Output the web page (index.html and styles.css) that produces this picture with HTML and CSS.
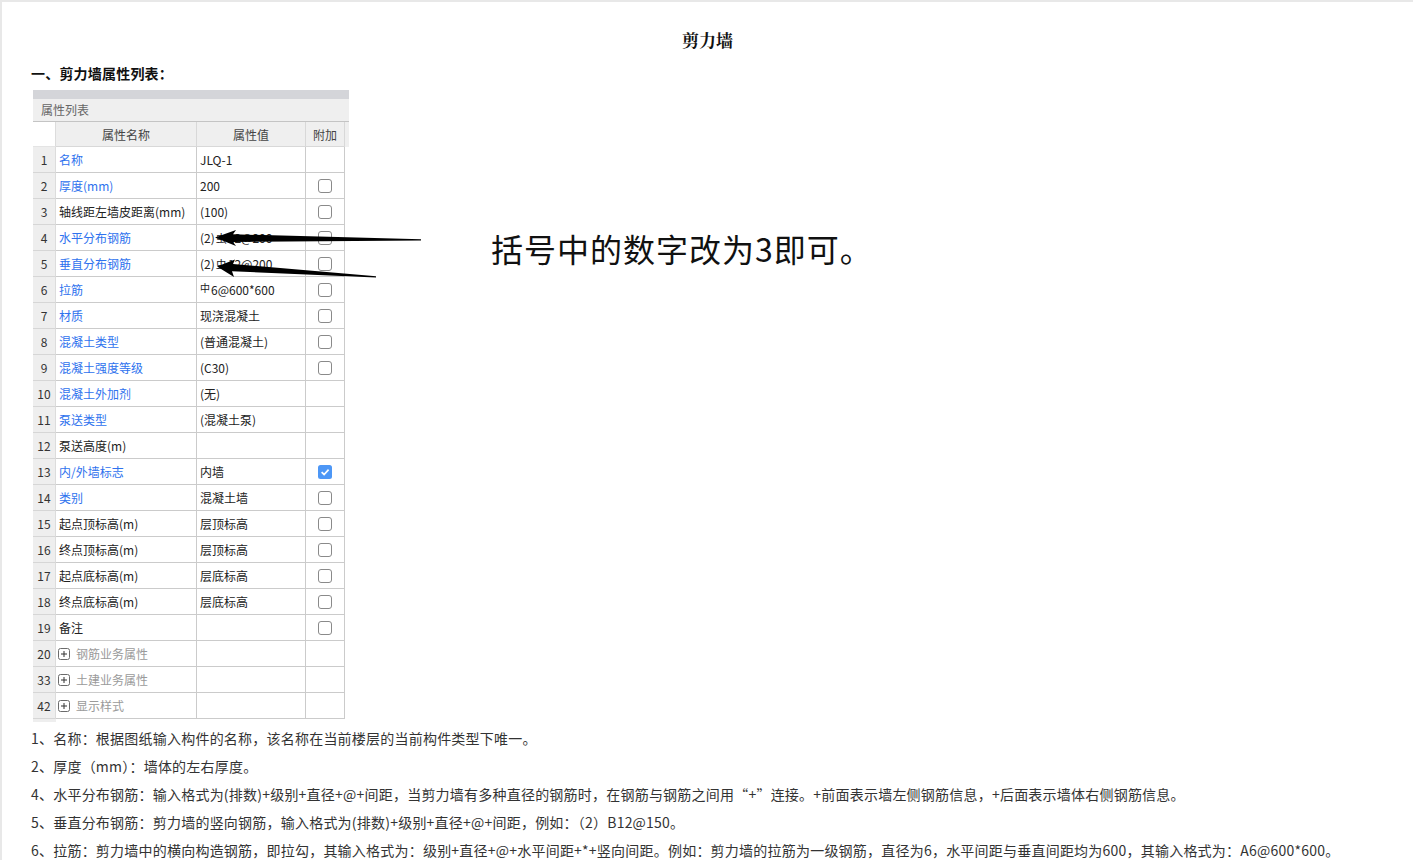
FILE: index.html
```html
<!DOCTYPE html>
<html lang="zh-CN">
<head>
<meta charset="utf-8">
<title>剪力墙</title>
<link rel="stylesheet" href="styles.css">
</head>
<body>
<div class="page">
  <h1 class="title">剪力墙</h1>
  <h2 class="heading">一、剪力墙属性列表：</h2>
  <div class="figure">
    <div class="prop">
      <div class="topbar"></div>
      <div class="caption">属性列表</div>
      <div class="row hdr">
        <div class="c idx blank"></div>
        <div class="c hc">属性名称</div>
        <div class="c hc">属性值</div>
        <div class="c hc">附加</div>
        <div class="c fill"></div>
      </div>
      <div class="row"><div class="c idx">1</div><div class="c name blue">名称</div><div class="c val">JLQ-1</div><div class="c ext"></div></div>
      <div class="row"><div class="c idx">2</div><div class="c name blue">厚度(mm)</div><div class="c val">200</div><div class="c ext"><span class="cb"></span></div></div>
      <div class="row"><div class="c idx">3</div><div class="c name">轴线距左墙皮距离(mm)</div><div class="c val">(100)</div><div class="c ext"><span class="cb"></span></div></div>
      <div class="row"><div class="c idx">4</div><div class="c name blue">水平分布钢筋</div><div class="c val">(2)<span class="rb3">虫</span>12@200</div><div class="c ext"><span class="cb"></span></div></div>
      <div class="row"><div class="c idx">5</div><div class="c name blue">垂直分布钢筋</div><div class="c val">(2)<span class="rb3">虫</span>12@200</div><div class="c ext"><span class="cb"></span></div></div>
      <div class="row"><div class="c idx">6</div><div class="c name blue">拉筋</div><div class="c val"><span class="rb1">中</span>6@600*600</div><div class="c ext"><span class="cb"></span></div></div>
      <div class="row"><div class="c idx">7</div><div class="c name blue">材质</div><div class="c val">现浇混凝土</div><div class="c ext"><span class="cb"></span></div></div>
      <div class="row"><div class="c idx">8</div><div class="c name blue">混凝土类型</div><div class="c val">(普通混凝土)</div><div class="c ext"><span class="cb"></span></div></div>
      <div class="row"><div class="c idx">9</div><div class="c name blue">混凝土强度等级</div><div class="c val">(C30)</div><div class="c ext"><span class="cb"></span></div></div>
      <div class="row"><div class="c idx">10</div><div class="c name blue">混凝土外加剂</div><div class="c val">(无)</div><div class="c ext"></div></div>
      <div class="row"><div class="c idx">11</div><div class="c name blue">泵送类型</div><div class="c val">(混凝土泵)</div><div class="c ext"></div></div>
      <div class="row"><div class="c idx">12</div><div class="c name">泵送高度(m)</div><div class="c val"></div><div class="c ext"></div></div>
      <div class="row"><div class="c idx">13</div><div class="c name blue">内/外墙标志</div><div class="c val">内墙</div><div class="c ext"><svg class="cbx" width="14" height="14" viewBox="0 0 14 14"><rect x="0" y="0" width="14" height="14" rx="2.5" fill="#4d97f6"/><path d="M3.6 7.2 L6.1 9.5 L10.6 4.7" fill="none" stroke="#fff" stroke-width="1.7"/></svg></div></div>
      <div class="row"><div class="c idx">14</div><div class="c name blue">类别</div><div class="c val">混凝土墙</div><div class="c ext"><span class="cb"></span></div></div>
      <div class="row"><div class="c idx">15</div><div class="c name">起点顶标高(m)</div><div class="c val">层顶标高</div><div class="c ext"><span class="cb"></span></div></div>
      <div class="row"><div class="c idx">16</div><div class="c name">终点顶标高(m)</div><div class="c val">层顶标高</div><div class="c ext"><span class="cb"></span></div></div>
      <div class="row"><div class="c idx">17</div><div class="c name">起点底标高(m)</div><div class="c val">层底标高</div><div class="c ext"><span class="cb"></span></div></div>
      <div class="row"><div class="c idx">18</div><div class="c name">终点底标高(m)</div><div class="c val">层底标高</div><div class="c ext"><span class="cb"></span></div></div>
      <div class="row"><div class="c idx">19</div><div class="c name">备注</div><div class="c val"></div><div class="c ext"><span class="cb"></span></div></div>
      <div class="row"><div class="c idx">20</div><div class="c name grp"><svg class="plus" width="12" height="12" viewBox="0 0 12 12"><rect x="0.5" y="0.5" width="11" height="11" rx="2" fill="#fff" stroke="#6b6b6b"/><path d="M3 6 H9 M6 3 V9" stroke="#333" stroke-width="1"/></svg>钢筋业务属性</div><div class="c val"></div><div class="c ext"></div></div>
      <div class="row"><div class="c idx">33</div><div class="c name grp"><svg class="plus" width="12" height="12" viewBox="0 0 12 12"><rect x="0.5" y="0.5" width="11" height="11" rx="2" fill="#fff" stroke="#6b6b6b"/><path d="M3 6 H9 M6 3 V9" stroke="#333" stroke-width="1"/></svg>土建业务属性</div><div class="c val"></div><div class="c ext"></div></div>
      <div class="row"><div class="c idx">42</div><div class="c name grp"><svg class="plus" width="12" height="12" viewBox="0 0 12 12"><rect x="0.5" y="0.5" width="11" height="11" rx="2" fill="#fff" stroke="#6b6b6b"/><path d="M3 6 H9 M6 3 V9" stroke="#333" stroke-width="1"/></svg>显示样式</div><div class="c val"></div><div class="c ext"></div></div>
      <div class="foot"></div>
    </div>
    <div class="note">括号中的数字改为3即可。</div>
    <svg class="arrows" width="420" height="200" viewBox="0 0 420 200">
      <g transform="translate(-33,-90)">
        <polygon points="215,237.5 236,230 233,234.3 421,239.3 421,240.5 233,242 236,246" fill="#000"/>
        <polygon points="217,266.5 235,259.5 233,264 376,276.3 376,277.4 232,271.2 234,277" fill="#000"/>
      </g>
    </svg>
  </div>
  <div class="notes">
    <p>1、名称：根据图纸输入构件的名称，该名称在当前楼层的当前构件类型下唯一。</p>
    <p>2、厚度（mm）：墙体的左右厚度。</p>
    <p>4、水平分布钢筋：输入格式为(排数)+级别+直径+@+间距，当剪力墙有多种直径的钢筋时，在钢筋与钢筋之间用“+”连接。+前面表示墙左侧钢筋信息，+后面表示墙体右侧钢筋信息。</p>
    <p>5、垂直分布钢筋：剪力墙的竖向钢筋，输入格式为(排数)+级别+直径+@+间距，例如：（2）B12@150。</p>
    <p>6、拉筋：剪力墙中的横向构造钢筋，即拉勾，其输入格式为：级别+直径+@+水平间距+*+竖向间距。例如：剪力墙的拉筋为一级钢筋，直径为6，水平间距与垂直间距均为600，其输入格式为：A6@600*600。</p>
  </div>
</div>
</body>
</html>
```

FILE: styles.css
```css
html, body {
  margin: 0;
  padding: 0;
  background: #fff;
}
body {
  font-family: "Noto Sans CJK SC", "Noto Sans", sans-serif;
  color: #222;
  overflow: hidden;
}
.page {
  border-top: 2px solid #e8e8e8;
  border-left: 2px solid #e8e8e8;
  height: 860px;
  box-sizing: border-box;
}
.title {
  margin: 0;
  padding-top: 26px;
  text-align: center;
  font-size: 17px;
  line-height: 24px;
  font-weight: bold;
  font-family: "Noto Serif CJK SC", "Noto Sans CJK SC", serif;
  color: #111;
}
.heading {
  margin: 11px 0 0 29px;
  font-size: 14px;
  line-height: 20px;
  font-weight: bold;
  color: #111;
  letter-spacing: 0.2px;
}
.figure {
  display: flex;
  align-items: flex-start;
  margin: 7px 0 0 31px;
  position: relative;
}
.prop {
  width: 316px;
  font-size: 12px;
  flex: none;
}
.topbar {
  height: 9px;
  background: #d4d5d9;
}
.caption {
  height: 22px;
  line-height: 22px;
  background: #efefef;
  color: #666;
  padding-left: 8px;
  border-bottom: 1px solid #c4c4c4;
}
.row {
  display: grid;
  grid-template-columns: 23px 141px 109px 39px;
  height: 26px;
}
.row.hdr {
  grid-template-columns: 23px 141px 109px 39px 4px;
  height: 25px;
  background: #efefef;
}
.c {
  box-sizing: border-box;
  border-right: 1px solid #cbcbcb;
  border-bottom: 1px solid #cbcbcb;
  display: flex;
  align-items: center;
  white-space: nowrap;
  overflow: hidden;
  color: #222;
}
.idx {
  background: #eeeeee;
  justify-content: center;
  color: #333;
  border-right-color: #dcdcdc;
  border-bottom-color: #d6d6d6;
}
.idx.blank {
  background: #fff;
  border-bottom-color: #e4e4e4;
}
.hc {
  justify-content: center;
  color: #444;
  border-bottom-color: #d8d8d8;
  border-right-color: #d8d8d8;
}
.fill {
  border: none;
}
.name {
  padding-left: 3px;
}
.val {
  padding-left: 3px;
}
.ext {
  justify-content: center;
}
.blue {
  color: #2e72ee;
}
.grp {
  color: #9a9a9a;
  padding-left: 2px;
}
.plus {
  margin-right: 6px;
  flex: none;
}
.cb {
  width: 14px;
  height: 14px;
  box-sizing: border-box;
  border: 1px solid #8a8a8a;
  border-radius: 3px;
  background: #fff;
}
.rb3 {
  font-size: 11px;
  margin: 0 1px;
}
.rb1 {
  font-size: 10px;
  position: relative;
  top: -2px;
  margin-right: 1px;
}
.foot {
  width: 23px;
  height: 3px;
  background: #eeeeee;
}
.note {
  margin: 138px 0 0 142px;
  font-size: 32px;
  line-height: 40px;
  letter-spacing: 1px;
  color: #111;
  white-space: nowrap;
}
.arrows {
  position: absolute;
  left: 0;
  top: 0;
  overflow: visible;
  pointer-events: none;
}
.notes {
  margin: 2px 0 0 29px;
  font-size: 14px;
  line-height: 28px;
  letter-spacing: 0.22px;
  color: #333;
  white-space: nowrap;
}
.notes p {
  margin: 0;
}
```
